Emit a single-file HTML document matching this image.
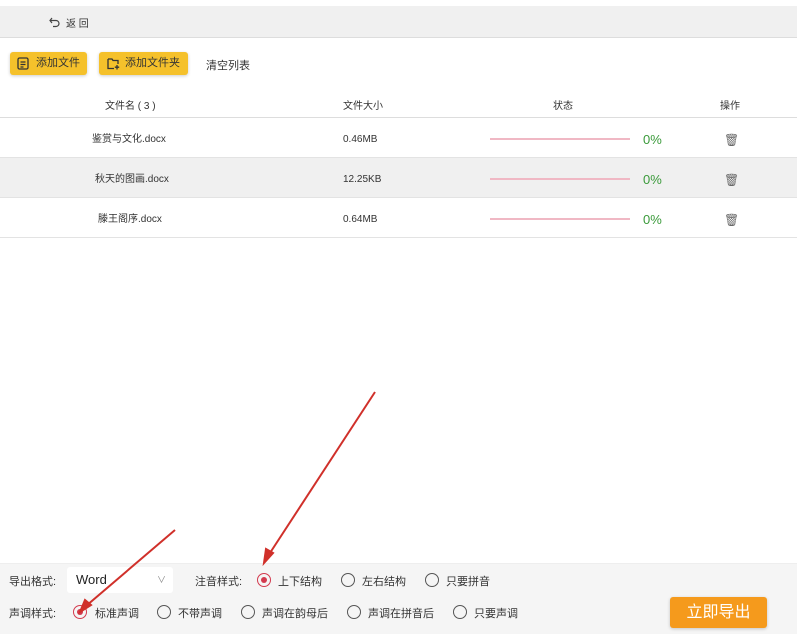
<!DOCTYPE html>
<html><head><meta charset="utf-8"><style>
*{margin:0;padding:0;box-sizing:border-box}
body{width:797px;height:634px;overflow:hidden;background:#fff;font-family:"Liberation Sans","Noto Sans CJK SC",sans-serif;color:#333;position:relative;font-size:11px}
.abs{position:absolute}
.top{left:0;top:6px;width:797px;height:32px;background:#f0f0f0;border-bottom:1px solid #ddd}
.btn{top:52px;height:23px;background:#f5c12b;border-radius:3px;box-shadow:0 1px 3px rgba(0,0,0,.2);font-size:11px;line-height:23px;color:#333;padding-left:26px}
.row{left:0;width:797px;height:40px;border-bottom:1px solid #e3e3e3;font-size:10px}
.row span{position:absolute;top:2px;line-height:40px}
.bar{position:absolute;left:490px;top:20px;width:140px;height:2px;background:#f0b8c4}
.pct{left:643px;color:#3a9a3a;font-size:13px}
.radio{width:14px;height:14px;border:1.5px solid #555;border-radius:50%;position:absolute}
.radio.on{border-color:#d33a4e}
.radio.on::after{content:"";position:absolute;left:2.5px;top:2.5px;width:6px;height:6px;border-radius:50%;background:#d33a4e}
.lbl{font-size:11px;position:absolute}
</style></head><body>
<div class="abs top"></div>
<svg class="abs" style="left:49px;top:16px" width="12" height="12" viewBox="0 0 12 12"><path d="M3 2 L1 4.5 L3 7 M1 4.5 H7 A3 3 0 0 1 7 10.5 H4" fill="none" stroke="#444" stroke-width="1.2"/></svg>
<div class="abs" style="left:66px;top:15px;font-size:10px">返 回</div>
<div class="abs btn" style="left:10px;width:77px">添加文件</div>
<svg class="abs" style="left:17px;top:57px" width="12" height="13" viewBox="0 0 12 13"><rect x="1" y="1" width="10" height="11" rx="1.5" fill="none" stroke="#333" stroke-width="1.3"/><path d="M3.5 5H8.5M3.5 7.5H8.5M3.5 10H6.5" stroke="#333" stroke-width="1.2"/></svg>
<div class="abs btn" style="left:99px;width:89px">添加文件夹</div>
<svg class="abs" style="left:107px;top:57px" width="13" height="13" viewBox="0 0 13 13"><path d="M1 2H5L6 3.5H11V7M7 11.5H1V2" fill="none" stroke="#333" stroke-width="1.3"/><path d="M10 8V12.5M7.8 10.2H12.2" stroke="#333" stroke-width="1.3"/></svg>
<div class="abs" style="left:206px;top:57px;font-size:11px">清空列表</div>
<div class="abs" style="top:97px;left:105px;font-size:10px">文件名 ( 3 )</div>
<div class="abs" style="top:97px;left:343px;font-size:10px">文件大小</div>
<div class="abs" style="top:97px;left:553px;font-size:10px">状态</div>
<div class="abs" style="top:97px;left:720px;font-size:10px">操作</div>
<div class="abs" style="left:0;top:117px;width:797px;height:1px;background:#ddd"></div>
<div class="abs row" style="top:118px"><span style="left:92px">鉴赏与文化.docx</span><span style="left:343px">0.46MB</span><div class="bar"></div><span class="pct">0%</span><span style="left:724px;font-size:12px;color:#666">🗑</span></div>
<div class="abs row" style="top:158px;background:#f0f0f0"><span style="left:95px">秋天的图画.docx</span><span style="left:343px">12.25KB</span><div class="bar"></div><span class="pct">0%</span><span style="left:724px;font-size:12px;color:#666">🗑</span></div>
<div class="abs row" style="top:198px"><span style="left:98px">滕王阁序.docx</span><span style="left:343px">0.64MB</span><div class="bar"></div><span class="pct">0%</span><span style="left:724px;font-size:12px;color:#666">🗑</span></div>
<div class="abs" style="left:0;top:563px;width:797px;height:71px;background:#f5f5f5;border-top:1px solid #eee"></div>
<div class="lbl" style="left:9px;top:573px">导出格式:</div>
<div class="abs" style="left:67px;top:567px;width:106px;height:26px;background:#fff;border-radius:3px"></div>
<div class="abs" style="left:76px;top:572px;font-size:13px;color:#222">Word</div>
<div class="abs" style="left:157px;top:573px;font-size:9px;color:#888">∨</div>
<div class="lbl" style="left:195px;top:573px">注音样式:</div>
<div class="radio on" style="left:257px;top:573px"></div><div class="lbl" style="left:278px;top:573px">上下结构</div>
<div class="radio" style="left:341px;top:573px"></div><div class="lbl" style="left:362px;top:573px">左右结构</div>
<div class="radio" style="left:425px;top:573px"></div><div class="lbl" style="left:446px;top:573px">只要拼音</div>
<div class="lbl" style="left:9px;top:605px">声调样式:</div>
<div class="radio on" style="left:73px;top:605px"></div><div class="lbl" style="left:95px;top:605px">标准声调</div>
<div class="radio" style="left:157px;top:605px"></div><div class="lbl" style="left:178px;top:605px">不带声调</div>
<div class="radio" style="left:241px;top:605px"></div><div class="lbl" style="left:262px;top:605px">声调在韵母后</div>
<div class="radio" style="left:347px;top:605px"></div><div class="lbl" style="left:368px;top:605px">声调在拼音后</div>
<div class="radio" style="left:453px;top:605px"></div><div class="lbl" style="left:474px;top:605px">只要声调</div>
<div class="abs" style="left:670px;top:597px;width:97px;height:31px;background:#f59a1c;border-radius:3px;color:#fff;font-size:16px;line-height:31px;text-align:center;box-shadow:0 1px 3px rgba(0,0,0,.2)">立即导出</div>
<svg class="abs" style="left:0;top:0" width="797" height="634"><g stroke="#d0302a" stroke-width="2" fill="#d0302a"><line x1="375" y1="392" x2="268" y2="556"/><polygon points="264,563 266,549 273,553" /><line x1="175" y1="530" x2="86" y2="606"/><polygon points="80,612 85,600 91,605"/></g></svg>
</body></html>
